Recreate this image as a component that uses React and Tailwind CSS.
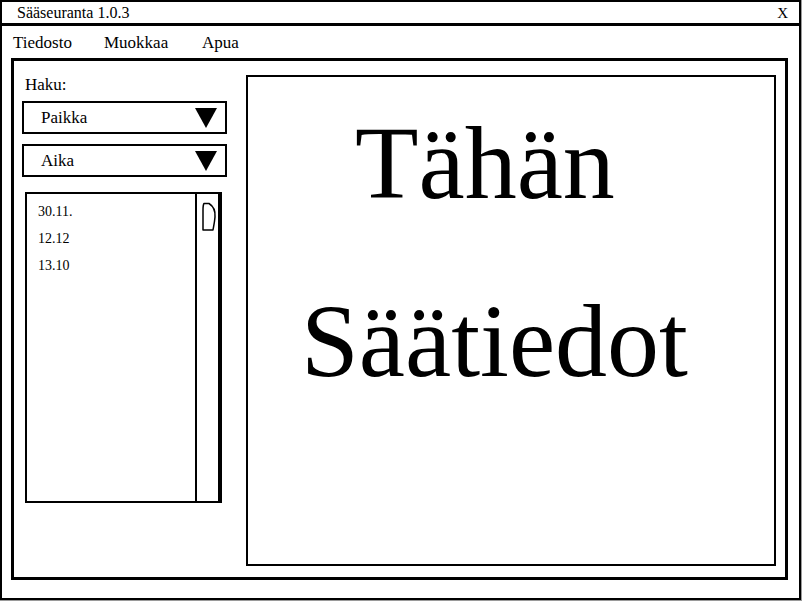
import React from "react";

const serif = { fontFamily: '"Liberation Serif", "DejaVu Serif", serif' };

function Triangle() {
  return (
    <svg width="22" height="20" viewBox="0 0 22 20" className="shrink-0">
      <polygon points="0,0 22,0 11,20" fill="#000" />
    </svg>
  );
}

function Dropdown({ label, className = "" }) {
  return (
    <div className={`flex items-center justify-between w-[205px] h-[33px] border-2 border-black pl-[17px] pr-[8px] ${className}`}>
      <span className="text-[17px] leading-[20px]">{label}</span>
      <Triangle />
    </div>
  );
}

export default function App() {
  return (
    <div className="w-[802px] h-[601px] bg-[#9a9a9a]" style={serif}>
      <div className="w-[801px] h-[600px] bg-white border-2 border-black flex flex-col text-black">
        {/* title bar */}
        <div className="h-[24px] border-b-[3px] border-black flex items-center justify-between pl-[15px] pr-[11px] shrink-0">
          <span className="text-[16px] leading-[18px] mt-[1px]">Sääseuranta 1.0.3</span>
          <span className="text-[15px] leading-[18px] mt-[1px]">X</span>
        </div>
        {/* menu */}
        <div className="h-[32px] flex items-center pl-[11px] text-[17px] leading-[20px] shrink-0">
          <span className="w-[91px] mt-[1px]">Tiedosto</span>
          <span className="w-[98px] mt-[1px]">Muokkaa</span>
          <span className="mt-[1px]">Apua</span>
        </div>
        {/* frame */}
        <div className="ml-[9px] mr-[11px] h-[522px] border-[3px] border-black flex">
          {/* left column */}
          <div className="w-[232px] shrink-0 pl-[8px] pt-[14px] flex flex-col">
            <div className="text-[17px] leading-[20px] pl-[3px]">Haku:</div>
            <Dropdown label="Paikka" className="mt-[6px]" />
            <Dropdown label="Aika" className="mt-[10px]" />
            <div className="mt-[15px] ml-[3px] w-[197px] h-[311px] border-2 border-r-[4px] border-black flex">
              <div className="flex-1 border-r-2 border-black pl-[11px] pt-[10px] flex flex-col text-[14px] leading-[16px]">
                <span>30.11.</span>
                <span className="mt-[11px]">12.12</span>
                <span className="mt-[11px]">13.10</span>
              </div>
              <div className="w-[21px] shrink-0 pl-[3px] pt-[7px]">
                <svg width="17" height="31" viewBox="0 0 17 31">
                  <path
                    d="M3 29 L3 9 Q3 4 4 2.5 L9 2.5 C13 5 15.5 10 15 16 C14.5 22 13.5 26 13 29 Z"
                    fill="none"
                    stroke="#000"
                    strokeWidth="1.5"
                    strokeLinejoin="round"
                  />
                </svg>
              </div>
            </div>
          </div>
          {/* right panel */}
          <div className="flex-1 mt-[14px] mb-[11px] mr-[9px] border-2 border-black flex flex-col">
            <div className="text-[104px] leading-[104px] ml-[107px] mt-[34px]">Tähän</div>
            <div className="text-[104px] leading-[104px] ml-[53px] mt-[74px]">Säätiedot</div>
          </div>
        </div>
      </div>
    </div>
  );
}
